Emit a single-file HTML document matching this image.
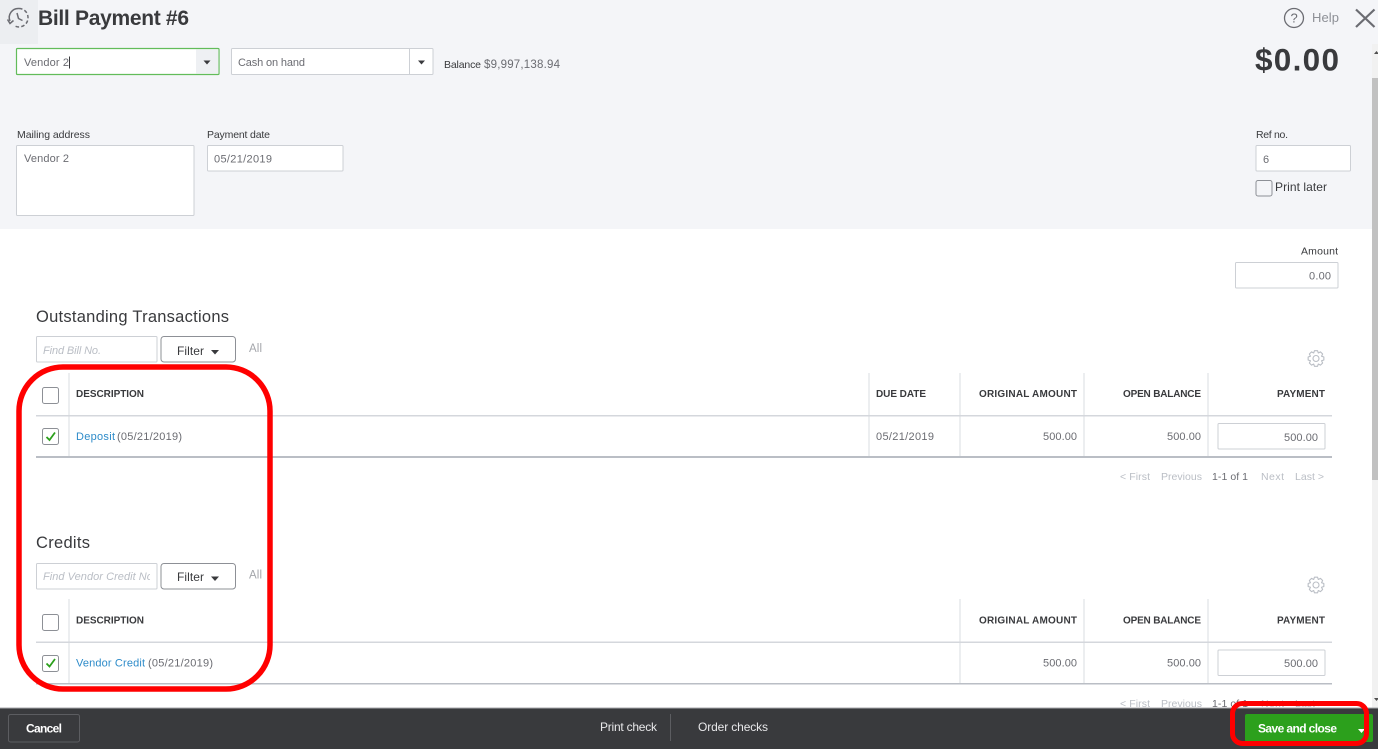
<!DOCTYPE html>
<html lang="en">
<head>
<meta charset="utf-8">
<title>Bill Payment #6</title>
<style>
html,body{margin:0;padding:0;background:#fff;width:1378px;height:749px;overflow:hidden}
svg{display:block;position:absolute;left:0;top:0;filter:blur(.3px)}
text{font-family:"Liberation Sans",sans-serif;fill:#6b6c72;font-size:11px}
.l{fill:#393a3d;font-size:10.5px}
.h{fill:#393a3d;font-size:10px;font-weight:bold}
.t{fill:#393a3d;font-size:16.5px}
.p{fill:#babec5;font-size:10.5px}
.ph{fill:#babec5;font-size:11px;font-style:italic}
.a{fill:#2d8bc9}
.box{fill:#fff;stroke:#cdd0d5;stroke-width:1}
.cb{fill:#fff;stroke:#8d9096;stroke-width:1}
.ln{stroke:#e6e8ec;stroke-width:1.5}
</style>
</head>
<body>
<svg width="1378" height="749" viewBox="0 0 1378 749" xmlns="http://www.w3.org/2000/svg">
<defs><clipPath id="c1"><rect x="37" y="564" width="113" height="24"/></clipPath></defs>
<rect width="1378" height="749" fill="#fff"/>
<rect width="1378" height="229" fill="#f4f5f8"/>
<rect width="38" height="44" fill="#eceef1"/>

<!-- history icon -->
<g fill="none" stroke="#6b6c72" stroke-width="1.5">
<path d="M10 21A9 9 0 0 1 19 8.500"/>
<path d="M19 8.500A9 9 0 0 1 28 17.500A9 9 0 0 1 15 26" stroke-dasharray="3.500 2.200"/>
<path d="M17 13L18.500 18.500L22.500 20.500"/>
<path d="M7.500 19.500L10 23.500L13.500 20.500"/>
</g>
<text x="38" y="25" textLength="151" lengthAdjust="spacing" font-weight="bold" style="font-size:21px;fill:#393a3d">Bill Payment #6</text>

<!-- help / close -->
<circle cx="1294" cy="18" r="9.500" fill="none" stroke="#6b6c72" stroke-width="1.300"/>
<text x="1290.500" y="22.500" textLength="7" style="font-size:13px">?</text>
<text x="1312" y="22" textLength="27" style="font-size:13px;fill:#8d9096">Help</text>
<path d="M1356 9.500L1374.500 27M1374.500 9.500L1356 27" stroke="#6b6c72" stroke-width="2.200" fill="none"/>
<text x="1255" y="70.500" textLength="84" lengthAdjust="spacing" font-weight="bold" style="font-size:31.500px;fill:#393a3d">$0.00</text>

<!-- vendor / account -->
<rect x="16.500" y="48.500" width="202.500" height="26" fill="#fff" stroke="#62bc5a" stroke-width="1.200" rx="1"/>
<rect x="196" y="49.500" width="22.500" height="24" fill="#eef0f3"/>
<path d="M203.500 60.500h7l-3.500 4z" fill="#393a3d"/>
<text x="24" y="66" textLength="45">Vendor 2</text>
<rect x="69" y="56.500" width="1" height="12" fill="#393a3d"/>
<rect class="box" x="231.500" y="48.500" width="201.500" height="26" rx="1"/>
<rect x="409" y="49" width="1" height="25" fill="#cdd0d5"/>
<path d="M418 60.500h7l-3.500 4z" fill="#393a3d"/>
<text x="238" y="66" textLength="67">Cash on hand</text>
<text x="444" y="68" textLength="37" style="font-size:10.500px;fill:#393a3d">Balance</text>
<text x="484" y="68" textLength="76" style="font-size:11.500px">$9,997,138.94</text>

<!-- address row -->
<text class="l" x="17" y="138" textLength="73">Mailing address</text>
<rect class="box" x="16.500" y="145.500" width="177.500" height="70" rx="1"/>
<text x="24" y="162" textLength="45">Vendor 2</text>
<text class="l" x="207" y="138" textLength="63">Payment date</text>
<rect class="box" x="207.500" y="145.500" width="135.500" height="25.500" rx="1"/>
<text x="214" y="162.500" textLength="58">05/21/2019</text>
<text class="l" x="1256" y="138" textLength="32">Ref no.</text>
<rect class="box" x="1256" y="145.500" width="94.500" height="25.500" rx="1"/>
<text x="1263" y="163" textLength="6">6</text>
<rect x="1256" y="180.500" width="16" height="15.500" rx="2" fill="#f4f5f8" stroke="#8d9096"/>
<text x="1275" y="191" textLength="52" style="font-size:12px;fill:#393a3d">Print later</text>

<!-- amount -->
<text class="l" x="1301" y="254.500" textLength="37">Amount</text>
<rect class="box" x="1235.500" y="262.500" width="102.500" height="25.500" rx="1"/>
<text x="1309" y="279.500" textLength="22">0.00</text>

<!-- Outstanding -->
<text class="t" x="36" y="322" textLength="193" lengthAdjust="spacing">Outstanding Transactions</text>
<rect class="box" x="36.500" y="336.500" width="120.500" height="25.500" rx="1"/>
<text class="ph" x="43" y="354" textLength="58">Find Bill No.</text>
<rect x="161" y="336.500" width="74.500" height="25.500" rx="3" fill="#fff" stroke="#8d9096"/>
<text x="177" y="355" textLength="27" style="font-size:12px;fill:#393a3d">Filter</text>
<path d="M211 350h8l-4 4.500z" fill="#393a3d"/>
<text x="249" y="352" textLength="13" style="font-size:11.500px;fill:#a4a6ab">All</text>
<path transform="translate(1316 358.500)" fill="none" stroke="#babec5" stroke-width="1.100" stroke-linejoin="round" d="M7.850 -1.530L7.850 1.530L5.540 2.300L6.630 4.470L4.470 6.630L2.300 5.540L1.530 7.850L-1.530 7.850L-2.300 5.540L-4.470 6.630L-6.630 4.470L-5.540 2.300L-7.850 1.530L-7.850 -1.530L-5.540 -2.300L-6.630 -4.470L-4.470 -6.630L-2.300 -5.540L-1.530 -7.850L1.530 -7.850L2.300 -5.540L4.470 -6.630L6.630 -4.470L5.540 -2.300Z"/>
<circle cx="1316" cy="358.500" r="3" fill="none" stroke="#babec5" stroke-width="1.100"/>

<path class="ln" d="M69 373V457M869 373V457M960 373V457M1084 373V457M1208 373V457"/>
<rect x="36" y="415" width="1296" height="1.500" fill="#d4d7dc"/>
<rect x="36" y="456" width="1296" height="2" fill="#babec5"/>
<rect class="cb" x="42.500" y="387.500" width="16" height="16" rx="2"/>
<rect class="cb" x="42.500" y="428.500" width="16" height="16" rx="2"/>
<path d="M46.500 437L49.500 440L55 432.500" fill="none" stroke="#2ca01c" stroke-width="1.800"/>
<text class="h" x="76" y="397" textLength="68">DESCRIPTION</text>
<text class="h" x="876" y="397" textLength="50">DUE DATE</text>
<text class="h" x="979" y="397" textLength="98">ORIGINAL AMOUNT</text>
<text class="h" x="1123" y="397" textLength="78">OPEN BALANCE</text>
<text class="h" x="1277" y="397" textLength="48">PAYMENT</text>
<text class="a" x="76" y="440" textLength="39">Deposit</text>
<text x="117" y="440" textLength="65">(05/21/2019)</text>
<text x="876" y="440" textLength="58">05/21/2019</text>
<text x="1043" y="440" textLength="34">500.00</text>
<text x="1167" y="440" textLength="34">500.00</text>
<rect class="box" x="1218" y="423.500" width="107" height="25.500" rx="1"/>
<text x="1284" y="441" textLength="34">500.00</text>
<text class="p" x="1120" y="480" textLength="30">&lt; First</text>
<text class="p" x="1161" y="480" textLength="41">Previous</text>
<text x="1212" y="480" textLength="36" style="font-size:10.500px">1-1 of 1</text>
<text class="p" x="1261" y="480" textLength="23">Next</text>
<text class="p" x="1295" y="480" textLength="29">Last &gt;</text>

<!-- Credits -->
<text class="t" x="36" y="548" textLength="54" lengthAdjust="spacing">Credits</text>
<rect class="box" x="36.500" y="563.500" width="120.500" height="25.500" rx="1"/>
<text class="ph" x="43" y="580" textLength="113" clip-path="url(#c1)">Find Vendor Credit No.</text>
<rect x="161" y="563.500" width="74.500" height="25.500" rx="3" fill="#fff" stroke="#8d9096"/>
<text x="177" y="581" textLength="27" style="font-size:12px;fill:#393a3d">Filter</text>
<path d="M211 576.500h8l-4 4.500z" fill="#393a3d"/>
<text x="249" y="578.500" textLength="13" style="font-size:11.500px;fill:#a4a6ab">All</text>
<path transform="translate(1316 585)" fill="none" stroke="#babec5" stroke-width="1.100" stroke-linejoin="round" d="M7.850 -1.530L7.850 1.530L5.540 2.300L6.630 4.470L4.470 6.630L2.300 5.540L1.530 7.850L-1.530 7.850L-2.300 5.540L-4.470 6.630L-6.630 4.470L-5.540 2.300L-7.850 1.530L-7.850 -1.530L-5.540 -2.300L-6.630 -4.470L-4.470 -6.630L-2.300 -5.540L-1.530 -7.850L1.530 -7.850L2.300 -5.540L4.470 -6.630L6.630 -4.470L5.540 -2.300Z"/>
<circle cx="1316" cy="585" r="3" fill="none" stroke="#babec5" stroke-width="1.100"/>

<path class="ln" d="M69 599V684M960 599V684M1084 599V684M1208 599V684"/>
<rect x="36" y="641.500" width="1296" height="1.500" fill="#d4d7dc"/>
<rect x="36" y="683" width="1296" height="1.500" fill="#babec5"/>
<rect class="cb" x="42.500" y="614.500" width="16" height="16" rx="2"/>
<rect class="cb" x="42.500" y="655.500" width="16" height="16" rx="2"/>
<path d="M46.500 663.500L49.500 666.500L55 659" fill="none" stroke="#2ca01c" stroke-width="1.800"/>
<text class="h" x="76" y="623.500" textLength="68">DESCRIPTION</text>
<text class="h" x="979" y="623.500" textLength="98">ORIGINAL AMOUNT</text>
<text class="h" x="1123" y="623.500" textLength="78">OPEN BALANCE</text>
<text class="h" x="1277" y="623.500" textLength="48">PAYMENT</text>
<text class="a" x="76" y="666.500" textLength="69">Vendor Credit</text>
<text x="148" y="666.500" textLength="65">(05/21/2019)</text>
<text x="1043" y="666.500" textLength="34">500.00</text>
<text x="1167" y="666.500" textLength="34">500.00</text>
<rect class="box" x="1218" y="650" width="107" height="25.500" rx="1"/>
<text x="1284" y="667" textLength="34">500.00</text>
<text class="p" x="1120" y="707" textLength="30">&lt; First</text>
<text class="p" x="1161" y="707" textLength="41">Previous</text>
<text x="1212" y="707" textLength="36" style="font-size:10.500px">1-1 of 1</text>
<text class="p" x="1261" y="707" textLength="23">Next</text>
<text class="p" x="1295" y="707" textLength="29">Last &gt;</text>

<!-- scrollbar -->
<rect x="1372" y="44" width="6" height="664" fill="#f1f1f1"/>
<rect x="1372" y="78" width="6" height="402" fill="#c1c1c1"/>
<path d="M1374 54l2.500-3l2.500 3z" fill="#505050"/>
<path d="M1374 698l2.500 3l2.500-3z" fill="#505050"/>

<!-- footer -->
<rect x="0" y="708" width="1378" height="41" fill="#393a3d"/>
<rect x="0" y="707.500" width="1378" height="1" fill="#a8aaad"/>
<rect x="8.500" y="714.500" width="71" height="27.500" rx="2" fill="none" stroke="#5c5d61"/>
<text x="26" y="732.500" textLength="36" font-weight="bold" style="font-size:12px;fill:#fff">Cancel</text>
<text x="600" y="731" textLength="57" style="font-size:12px;fill:#e8e8ea">Print check</text>
<rect x="670" y="714" width="1" height="27" fill="#5c5d61"/>
<text x="698" y="731" textLength="70" style="font-size:12px;fill:#e8e8ea">Order checks</text>
<rect x="1245" y="714" width="128" height="28" rx="2" fill="#2ca01c"/>
<text x="1258" y="732.500" textLength="79" font-weight="bold" style="font-size:12px;fill:#fff">Save and close</text>
<path d="M1358 729h7l-3.500 4z" fill="#fff"/>

<!-- red annotations -->
<rect x="19" y="367" width="251" height="322" rx="44" fill="none" stroke="#ff0000" stroke-width="5.500"/>
<rect x="1232.500" y="703.500" width="134" height="40" rx="10" fill="none" stroke="#ff0000" stroke-width="5"/>
</svg>
</body>
</html>
